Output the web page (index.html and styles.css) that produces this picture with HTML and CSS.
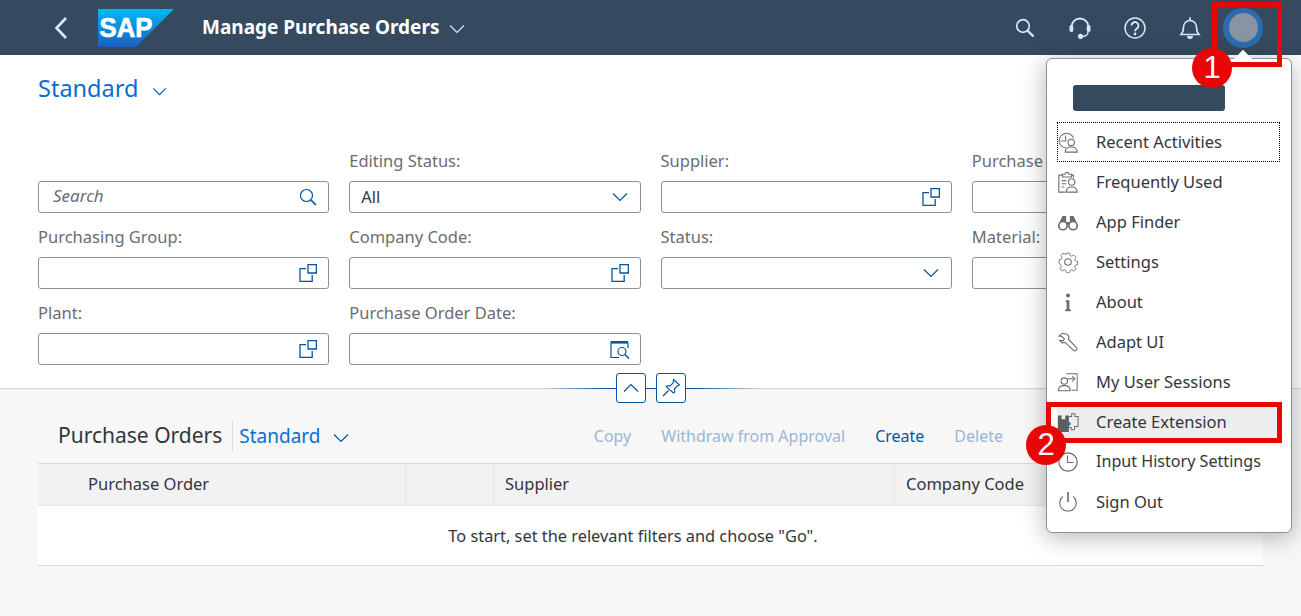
FILE: index.html
```html
<!DOCTYPE html>
<html lang="en">
<head>
<meta charset="utf-8">
<title>Manage Purchase Orders</title>
<link rel="stylesheet" href="styles.css">
</head>
<body>
<svg class="sprite" width="0" height="0" aria-hidden="true">
  <symbol id="i-chevron" viewBox="0 0 16 10"><path d="M1 1.500 8 8.500 15 1.500" fill="none" stroke="currentColor" stroke-width="1.200"/></symbol>
  <symbol id="i-vh" viewBox="0 0 18 18"><path d="M9 .6h8.400v8.400H9zM7 4.600H1v12.800h12.200V11" fill="none" stroke-width="1.300" stroke="currentColor"/></symbol>
</svg>
<div class="shell">
  <header class="shellbar">
    <svg class="back" viewBox="0 0 14 24"><path d="M12 2 2.500 12 12 22" fill="none" stroke="#d1e8ff" stroke-width="2.600"/></svg>
    <svg class="logo" viewBox="0 0 76 38">
      <defs><linearGradient id="sapgrad" x1="0" y1="0" x2="0" y2="1"><stop offset="0" stop-color="#00b9f2"/><stop offset="1" stop-color="#1d5fbf"/></linearGradient></defs>
      <path d="M0 0H76L38 38H0Z" fill="url(#sapgrad)"/>
      <text x="1.500" y="28" textLength="53" lengthAdjust="spacingAndGlyphs" class="logo-text">SAP</text>
    </svg>
    <div class="app-title">Manage Purchase Orders</div>
    <svg class="title-chevron"><use href="#i-chevron"/></svg>
    <div class="shell-actions">
      <svg class="shell-icon" viewBox="-1 -1 22 22"><circle cx="8" cy="8" r="6.300" fill="none" stroke="#d1e8ff" stroke-width="1.700"/><path d="M12.500 12.500 18.500 18.500" stroke="#d1e8ff" stroke-width="2.400"/></svg>
      <svg class="shell-icon" viewBox="0 0 22 22"><path d="M2.500 12V10a8.500 8.500 0 0 1 17 0v2" fill="none" stroke="#d1e8ff" stroke-width="1.800"/><rect x="0.500" y="8" width="3.800" height="7" rx="1.800" fill="#d1e8ff"/><rect x="17.700" y="8" width="3.800" height="7" rx="1.800" fill="#d1e8ff"/><path d="M19 15c0 3-3 4.500-6 4.500" fill="none" stroke="#d1e8ff" stroke-width="1.500"/><circle cx="11.500" cy="19.300" r="2.600" fill="#d1e8ff"/></svg>
      <svg class="shell-icon" viewBox="0 0 22 22"><circle cx="11" cy="11" r="10" fill="none" stroke="#d1e8ff" stroke-width="1.500"/><path d="M7.500 8.600a3.500 3.500 0 1 1 5.400 2.900c-1.300.8-1.900 1.300-1.900 2.800" fill="none" stroke="#d1e8ff" stroke-width="1.900"/><circle cx="11" cy="17" r="1.400" fill="#d1e8ff"/></svg>
      <svg class="shell-icon" viewBox="0 0 22 22"><path d="M2 17.500c2-2 2.500-3.500 2.500-7.500 0-3.500 2.800-6.500 6.500-6.500s6.500 3 6.500 6.500c0 4 .5 5.500 2.500 7.500z" fill="none" stroke="#d1e8ff" stroke-width="1.600"/><path d="M11 .6v3" stroke="#d1e8ff" stroke-width="1.800"/><path d="M8 19a3 3 0 0 0 6 0z" fill="#d1e8ff"/></svg>
      <div class="avatar"><div class="avatar-core"></div></div>
    </div>
  </header>

  <main class="page">
    <section class="filterbar">
      <div class="variant">
        <h1 class="variant-name">Standard</h1>
        <svg class="variant-chevron"><use href="#i-chevron"/></svg>
      </div>
      <div class="filters">
        <div class="field">
          <span class="field-label"></span>
          <div class="input"><span class="placeholder">Search</span>
            <svg class="input-icon" viewBox="0 0 18 18"><circle cx="7.500" cy="7.500" r="6" fill="none" stroke="currentColor" stroke-width="1.200"/><path d="M11.800 11.800 17 17" stroke="currentColor" stroke-width="1.700"/></svg>
          </div>
        </div>
        <div class="field">
          <span class="field-label">Editing Status:</span>
          <div class="input"><span class="value">All</span><svg class="input-chevron"><use href="#i-chevron"/></svg></div>
        </div>
        <div class="field">
          <span class="field-label">Supplier:</span>
          <div class="input"><svg class="input-vh"><use href="#i-vh"/></svg></div>
        </div>
        <div class="field">
          <span class="field-label">Purchase Document:</span>
          <div class="input"><svg class="input-vh"><use href="#i-vh"/></svg></div>
        </div>
        <div class="field">
          <span class="field-label">Purchasing Group:</span>
          <div class="input"><svg class="input-vh"><use href="#i-vh"/></svg></div>
        </div>
        <div class="field">
          <span class="field-label">Company Code:</span>
          <div class="input"><svg class="input-vh"><use href="#i-vh"/></svg></div>
        </div>
        <div class="field">
          <span class="field-label">Status:</span>
          <div class="input"><svg class="input-chevron"><use href="#i-chevron"/></svg></div>
        </div>
        <div class="field">
          <span class="field-label">Material:</span>
          <div class="input"><svg class="input-vh"><use href="#i-vh"/></svg></div>
        </div>
        <div class="field">
          <span class="field-label">Plant:</span>
          <div class="input"><svg class="input-vh"><use href="#i-vh"/></svg></div>
        </div>
        <div class="field">
          <span class="field-label">Purchase Order Date:</span>
          <div class="input">
            <svg class="input-cal" viewBox="0 0 20 19"><path d="M5 2H1v15.500h8" fill="none" stroke="currentColor" stroke-width="1.200"/><path d="M1 1h17v2.600H1z" fill="currentColor"/><path d="M18 3v5" stroke="currentColor" stroke-width="1.200"/><circle cx="12" cy="11.500" r="4" fill="none" stroke="currentColor" stroke-width="1.200"/><path d="M15 14.500 19 18.500" stroke="currentColor" stroke-width="1.500"/></svg>
          </div>
        </div>
      </div>
    </section>

    <div class="splitter">
      <button class="split-btn" type="button"><svg class="split-up" viewBox="0 0 16 10"><path d="M1 8.500 8 1.500 15 8.500" fill="none" stroke="currentColor" stroke-width="1.200"/></svg></button>
      <button class="split-btn" type="button"><svg class="split-pin" viewBox="0 0 18 18"><path d="M10.500 1.500 16.500 7l-2 .8-3 3.200.2 3-1.200 1L3.200 8.800l1-1.100 3 .2 3-3.200z" fill="none" stroke="currentColor" stroke-width="1.100" transform="translate(1 -1)"/><path d="M1 17 6.500 11.500" stroke="currentColor" stroke-width="1.200"/></svg></button>
    </div>

    <section class="results">
      <div class="toolbar">
        <h2 class="results-title">Purchase Orders</h2>
        <span class="results-variant">Standard</span>
        <svg class="results-chevron"><use href="#i-chevron"/></svg>
        <div class="actions">
          <span class="action is-disabled">Copy</span>
          <span class="action is-disabled">Withdraw from Approval</span>
          <span class="action">Create</span>
          <span class="action is-disabled">Delete</span>
        </div>
      </div>
      <div class="table">
        <div class="thead">
          <div class="th th-first">Purchase Order</div>
          <div class="th"></div>
          <div class="th">Supplier</div>
          <div class="th">Company Code</div>
        </div>
        <div class="empty">To start, set the relevant filters and choose "Go".</div>
      </div>
    </section>
  </main>

  <div class="popover-arrow"></div>
  <nav class="popover">
    <div class="user-name"></div>
    <ul class="menu">
      <li class="menu-item is-focused">
        <svg class="menu-icon" viewBox="0 0 24 24"><path d="M10 18.500A8 8 0 1 1 18 8" fill="none" stroke="currentColor" stroke-width="1.100"/><path d="M9.500 5v6H4" fill="none" stroke="currentColor" stroke-width="1.100"/><circle cx="15.500" cy="12.500" r="3.500" fill="none" stroke="currentColor" stroke-width="1.200"/><path d="M9 23c0-3.500 2.500-5.500 6.500-5.500s6.500 2 6.500 5.500z" fill="none" stroke="currentColor" stroke-width="1.200"/></svg>
        <span>Recent Activities</span>
      </li>
      <li class="menu-item">
        <svg class="menu-icon" viewBox="0 0 24 24"><path d="M6 4.500H2v18.500h7M16 4.500h2V7" fill="none" stroke="currentColor" stroke-width="1.200"/><path d="M6 6.500V3.500h3a2 2 0 0 1 4 0h3v3z" fill="none" stroke="currentColor" stroke-width="1.100"/><path d="M5 10.500h5M5 14h5M5 17.500h3" stroke="currentColor" stroke-width="1.100"/><circle cx="16" cy="12" r="3.500" fill="none" stroke="currentColor" stroke-width="1.200"/><path d="M10 23c0-3.500 2.500-5.500 6-5.500s6 2 6 5.500z" fill="none" stroke="currentColor" stroke-width="1.200"/></svg>
        <span>Frequently Used</span>
      </li>
      <li class="menu-item">
        <svg class="menu-icon" viewBox="0 0 24 24"><path d="M1.500 15 6 5.500h4V12h4V5.500h4l4.500 9.500z" fill="currentColor"/><circle cx="6.500" cy="16" r="4.500" fill="#fff" stroke="currentColor" stroke-width="1.800"/><circle cx="17.500" cy="16" r="4.500" fill="#fff" stroke="currentColor" stroke-width="1.800"/></svg>
        <span>App Finder</span>
      </li>
      <li class="menu-item">
        <svg class="menu-icon" viewBox="0 0 24 24"><path d="M10 2h4l.6 2.900 2 .9 2.600-1.500 2.700 2.900-1.600 2.400.8 2 2.900.7v4l-2.900.6-.8 2 1.600 2.500-2.700 2.800-2.600-1.600-2 .9-.6 2.900h-4l-.6-2.900-2-.9-2.600 1.600-2.700-2.800 1.600-2.500-.8-2L1 14V10l2.900-.7.8-2L3.100 4.900l2.700-2.900 2.600 1.500 2-.9z" fill="none" stroke="currentColor" stroke-width="1.100" transform="translate(12 12) scale(.88) translate(-12 -13)"/><circle cx="12" cy="12" r="3.600" fill="none" stroke="currentColor" stroke-width="1.200"/></svg>
        <span>Settings</span>
      </li>
      <li class="menu-item">
        <svg class="menu-icon" viewBox="0 0 24 24"><circle cx="12" cy="5" r="2.200" fill="currentColor"/><path d="M9.500 10h4v10h1.500v2H9v-2h1.500v-8h-1z" fill="currentColor"/></svg>
        <span>About</span>
      </li>
      <li class="menu-item">
        <svg class="menu-icon" viewBox="0 0 24 24"><path d="M2.500 5.500 6 2.500l5 1 2 2.500-.5 3 9 9.500c1 1.500-1.500 4-3 3L9 12.500l-3.500.5L3 10.500l4 0 1-2-2.500-2.500z" fill="none" stroke="currentColor" stroke-width="1.200"/></svg>
        <span>Adapt UI</span>
      </li>
      <li class="menu-item">
        <svg class="menu-icon" viewBox="0 0 24 24"><path d="M10 3H22v18h-6" fill="none" stroke="currentColor" stroke-width="1.100"/><path d="M12 8.500h7M16.500 5.500l3 3-3 3" fill="none" stroke="currentColor" stroke-width="1.100"/><circle cx="8" cy="11" r="3.500" fill="none" stroke="currentColor" stroke-width="1.200"/><path d="M1.500 21.500c0-3.500 2.500-5.500 6.500-5.500s6.500 2 6.500 5.500z" fill="none" stroke="currentColor" stroke-width="1.200"/></svg>
        <span>My User Sessions</span>
      </li>
      <li class="menu-item is-hover">
        <svg class="menu-icon" viewBox="0 0 24 24"><path d="M1 5h4v4h4V5h4v18H1z" fill="#5c5f62"/><path d="M13 6h3V3h3.500v3H23v11h-4v3.500h-3.500V18H13" fill="none" stroke="currentColor" stroke-width="1.100"/><circle cx="13" cy="14" r="2" fill="#2a6cb0"/></svg>
        <span>Create Extension</span>
      </li>
      <li class="menu-item">
        <svg class="menu-icon" viewBox="0 0 24 24"><circle cx="12" cy="12" r="10" fill="none" stroke="currentColor" stroke-width="1.300"/><path d="M11.500 5v7.500H18" fill="none" stroke="currentColor" stroke-width="1.200"/></svg>
        <span class="menu-long">Input History Settings</span>
      </li>
      <li class="menu-item">
        <svg class="menu-icon" viewBox="0 0 24 24"><path d="M6.500 6a9 9 0 1 0 11 0" fill="none" stroke="currentColor" stroke-width="1.200"/><path d="M12 1v11" stroke="currentColor" stroke-width="1.800"/></svg>
        <span>Sign Out</span>
      </li>
    </ul>
  </nav>

  <div class="callout callout-avatar"></div>
  <div class="callout callout-item"></div>
  <div class="badge badge-one">1</div>
  <div class="badge badge-two">2</div>
</div>
</body>
</html>
```

FILE: styles.css
```css
* { box-sizing: border-box; }
html, body { margin: 0; padding: 0; height: 100%; overflow: hidden; }
body { font-family: "Noto Sans", "Open Sans", Arial, sans-serif; font-size: 16.5px; color: #32363a; background: #f7f7f7; }
.sprite { position: absolute; }
.shell { position: relative; width: 1301px; height: 616px; overflow: hidden; }

/* Shell bar */
.shellbar { display: flex; align-items: center; height: 55px; background: #354a5f; padding-left: 54px; color: #d1e8ff; }
.back { width: 14px; height: 24px; }
.logo { width: 76px; height: 38px; margin-left: 30px; }
.logo-text { font-family: "Liberation Sans", Arial, sans-serif; font-weight: 700; font-size: 27px; fill: #fff; stroke: #fff; stroke-width: .7px; }
.app-title { margin-left: 28px; padding-bottom: 2px; font-size: 19px; font-weight: 700; color: #fff; }
.title-chevron { width: 16px; height: 10px; margin-left: 10px; margin-top: 2px; }
.shell-actions { display: flex; align-items: center; margin-left: auto; }
.shell-icon { width: 22px; height: 22px; margin-right: 33px; }
.shell-actions .shell-icon:nth-child(4) { margin-right: 22px; }
.avatar { display: flex; align-items: center; justify-content: center; width: 40px; height: 40px; margin-right: 38px; border-radius: 50%; background: #2a6cb0; }
.avatar-core { width: 29px; height: 29px; border-radius: 50%; background: #88949f; }

/* Filter bar */
.filterbar { background: #fff; padding: 16px 38px 23px; box-shadow: 0 1px 1px rgba(0,0,0,.12); }
.variant { display: flex; align-items: center; height: 34px; margin-bottom: 32px; }
.variant-name { margin: 0; font-size: 23.500px; font-weight: 400; color: #0a6ed1; line-height: 34px; }
.variant-chevron { width: 15px; height: 9px; margin-left: 14px; margin-top: 6px; color: #0854a0; }
.filters { display: grid; grid-template-columns: repeat(4, 1fr); column-gap: 20px; }
.field { display: flex; flex-direction: column; padding-top: 14px; height: 76px; }
.field-label { height: 20px; line-height: 20px; margin-bottom: 10px; color: #6a6d70; white-space: nowrap; }
.input { display: flex; align-items: center; height: 32px; padding: 0 11px; border: 1px solid #89919a; border-radius: 3px; background: #fff; color: #0854a0; }
.placeholder { font-size: 17px; font-style: italic; color: #6a6d70; padding-left: 3px; padding-bottom: 4px; }
.value { color: #32363a; padding-bottom: 2px; }
.input-icon { width: 18px; height: 18px; margin-left: auto; }
.input-chevron { width: 16px; height: 10px; margin-left: auto; margin-right: 1px; }
.input-vh { width: 18px; height: 18px; margin-left: auto; margin-right: 0; }
.input-cal { width: 20px; height: 19px; margin-left: auto; margin-right: -1px; }

/* Expand / pin splitter */
.splitter { position: relative; z-index: 1; display: flex; justify-content: center; align-items: center; gap: 10px; height: 30px; margin: -15px 0; }
.splitter::before { content: ""; position: absolute; left: 540px; width: 222px; top: 15px; height: 1px; background: linear-gradient(90deg, rgba(8,84,160,0), #0854a0 30%, #0854a0 70%, rgba(8,84,160,0)); }
.split-btn { position: relative; display: flex; align-items: center; justify-content: center; width: 30px; height: 30px; padding: 0; border: 1px solid #0854a0; border-radius: 3px; background: #fff; color: #0854a0; }
.split-up { width: 16px; height: 10px; }
.split-pin { width: 18px; height: 18px; }

/* Results */
.results { padding: 33px 38px 0; }
.toolbar { display: flex; align-items: center; height: 30px; margin-bottom: 12px; padding-left: 20px; }
.results-title { margin: 0; padding-right: 10px; font-size: 21px; font-weight: 400; line-height: 28px; height: 30px; border-right: 1px solid #d9d9d9; }
.results-variant { margin-left: 6px; font-size: 19px; color: #0a6ed1; }
.results-chevron { width: 16px; height: 10px; margin-left: 13px; margin-top: 3px; color: #0854a0; }
.actions { display: flex; gap: 30px; margin-left: auto; margin-right: 260px; font-size: 16px; }
.action { color: #0854a0; }
.is-disabled { opacity: .4; }
.thead { display: grid; grid-template-columns: 368px 88px 401px 1fr; height: 43px; background: #f2f2f2; border-top: 1px solid #d9d9d9; border-bottom: 1px solid #e5e5e5; }
.th { display: flex; align-items: center; padding-left: 11px; padding-bottom: 2px; border-right: 1px solid #e5e5e5; }
.th-first { padding-left: 50px; }
.empty { display: flex; align-items: center; justify-content: center; height: 60px; padding-right: 35px; font-size: 16.350px; background: #fff; border-bottom: 1px solid #d9d9d9; }

/* Popover */
.popover { position: absolute; z-index: 1; left: 1046px; top: 58px; width: 246px; height: 475px; padding: 26px 11px 0 10px; background: #fff; border: 1px solid #89919a; border-radius: 6px; box-shadow: 0 4px 24px rgba(0,0,0,.3); }
.popover-arrow { position: absolute; z-index: 2; left: 1234px; top: 50px; width: 18px; height: 18px; background: #fff; transform: rotate(45deg) scale(.72); }
.user-name { width: 152px; height: 26px; margin-left: 16px; margin-bottom: 11px; background: #354a5f; border-radius: 3px; }
.menu { display: flex; flex-direction: column; margin: 0; padding: 0; list-style: none; }
.menu-item { display: flex; align-items: center; gap: 17px; height: 40px; color: #32363a; white-space: nowrap; }
.menu-item span { padding-bottom: 2px; }
.menu-item .menu-long { font-size: 16.100px; }
.menu-icon { width: 22px; height: 22px; color: #6a6d70; flex: none; }
.is-focused { outline: 1px dotted #000; outline-offset: -1px; }
.is-hover { background: #ededed; }

/* Tutorial markers */
.callout { position: absolute; z-index: 3; border: 5px solid #e80606; }
.callout-avatar { left: 1212px; top: 2px; width: 70px; height: 65px; }
.callout-item { left: 1046px; top: 402px; width: 236px; height: 41px; }
.badge { position: absolute; z-index: 4; display: flex; align-items: center; justify-content: center; width: 40px; height: 40px; border-radius: 50%; background: #e80606; color: #fff; font-family: "Liberation Sans", Arial, sans-serif; font-size: 31px; }
.badge-one { left: 1192px; top: 48px; }
.badge-two { left: 1026px; top: 425px; }
```
